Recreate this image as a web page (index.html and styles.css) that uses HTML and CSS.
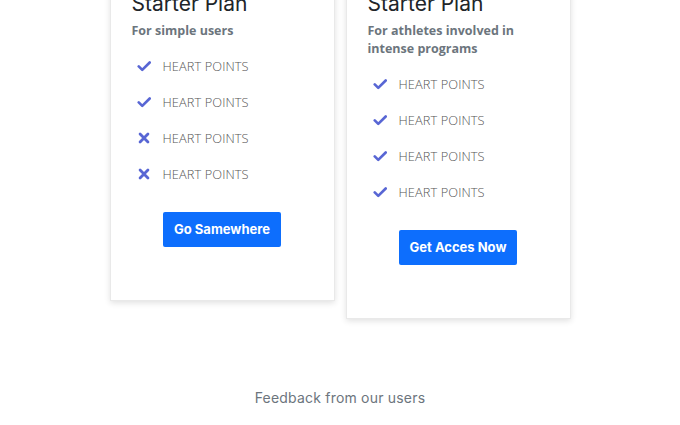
FILE: index.html
```html
<!DOCTYPE html>
<html>
<head>
<meta charset="utf-8">
<link rel="stylesheet" href="styles.css">
</head>
<body>
<section class="plans">
  <div class="card">
    <h3 class="title">Starter Plan</h3>
    <p class="sub">For simple users</p>
    <ul class="features">
      <li><svg class="ic" viewBox="0 0 16 16"><path d="M2 8.5 L6 12.5 L14.5 4" fill="none" stroke="currentColor" stroke-width="3" stroke-linecap="round" stroke-linejoin="round"/></svg>HEART POINTS</li>
      <li><svg class="ic" viewBox="0 0 16 16"><path d="M2 8.5 L6 12.5 L14.5 4" fill="none" stroke="currentColor" stroke-width="3" stroke-linecap="round" stroke-linejoin="round"/></svg>HEART POINTS</li>
      <li><svg class="ic" viewBox="0 0 16 16"><path d="M3.5 3.5 L12.5 12.5 M12.5 3.5 L3.5 12.5" fill="none" stroke="currentColor" stroke-width="3.2" stroke-linecap="round"/></svg>HEART POINTS</li>
      <li><svg class="ic" viewBox="0 0 16 16"><path d="M3.5 3.5 L12.5 12.5 M12.5 3.5 L3.5 12.5" fill="none" stroke="currentColor" stroke-width="3.2" stroke-linecap="round"/></svg>HEART POINTS</li>
    </ul>
    <div class="action"><a class="btn">Go Samewhere</a></div>
  </div>
  <div class="card">
    <h3 class="title">Starter Plan</h3>
    <p class="sub">For athletes involved in intense programs</p>
    <ul class="features">
      <li><svg class="ic" viewBox="0 0 16 16"><path d="M2 8.5 L6 12.5 L14.5 4" fill="none" stroke="currentColor" stroke-width="3" stroke-linecap="round" stroke-linejoin="round"/></svg>HEART POINTS</li>
      <li><svg class="ic" viewBox="0 0 16 16"><path d="M2 8.5 L6 12.5 L14.5 4" fill="none" stroke="currentColor" stroke-width="3" stroke-linecap="round" stroke-linejoin="round"/></svg>HEART POINTS</li>
      <li><svg class="ic" viewBox="0 0 16 16"><path d="M2 8.5 L6 12.5 L14.5 4" fill="none" stroke="currentColor" stroke-width="3" stroke-linecap="round" stroke-linejoin="round"/></svg>HEART POINTS</li>
      <li><svg class="ic" viewBox="0 0 16 16"><path d="M2 8.5 L6 12.5 L14.5 4" fill="none" stroke="currentColor" stroke-width="3" stroke-linecap="round" stroke-linejoin="round"/></svg>HEART POINTS</li>
    </ul>
    <div class="action"><a class="btn">Get Acces Now</a></div>
  </div>
</section>
<section class="feedback">
  <h4>Feedback from our users</h4>
</section>
</body>
</html>
```
FILE: styles.css
```css
* { box-sizing: border-box; }
html, body { margin: 0; padding: 0; background: #fff; }
body { font-family: "Open Sans", "Liberation Sans", sans-serif; color: #333; }

.plans {
  display: flex;
  justify-content: center;
  align-items: flex-start;
  gap: 11px;
  margin-top: -40px;
}

.card {
  width: 225px;
  background: #fff;
  border: 1px solid #e9e9e9;
  box-shadow: 0 2px 6px rgba(0, 0, 0, 0.12);
  padding: 30px 21px 53px;
}

.title {
  margin: 0;
  font-family: "Inter", sans-serif;
  font-weight: 400;
  font-size: 21px;
  line-height: 26px;
  color: #212529;
}

.sub {
  margin: 5px 0 0;
  font-family: "Open Sans", sans-serif;
  font-weight: 700;
  font-size: 12.5px;
  line-height: 18px;
  color: #6c757d;
}

.features {
  list-style: none;
  margin: 8px 0 0;
  padding: 0;
}

.features li {
  display: flex;
  align-items: center;
  height: 36px;
  font-family: "Open Sans", sans-serif;
  font-weight: 300;
  font-size: 12.8px;
  color: #555;
  letter-spacing: 0.1px;
}

.ic {
  width: 14px;
  height: 14px;
  margin: 0 12px 0 5px;
  color: #5866d4;
  flex: none;
}

.action {
  display: flex;
  justify-content: center;
  margin-top: 20px;
}

.btn {
  display: inline-block;
  background: #0d6efd;
  color: #fff;
  font-family: "Inter", sans-serif;
  font-weight: 700;
  font-size: 13px;
  line-height: 35px;
  height: 35px;
  padding: 0 11px;
  border-radius: 2px;
}

.feedback {
  text-align: center;
  padding-top: 70px;
}

.feedback h4 {
  margin: 0;
  font-family: "Inter", sans-serif;
  font-weight: 400;
  font-size: 14px;
  color: #6c757d;
  letter-spacing: 0.2px;
}
```
